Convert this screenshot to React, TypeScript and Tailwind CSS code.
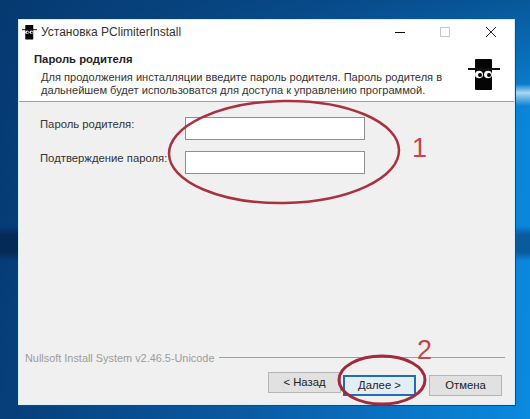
const FONT = "font-['Liberation_Sans',Arial,sans-serif]"

function HatIcon({ size }: { size: number }) {
  return (
    <svg width={size} height={size} viewBox="0 0 32 32">
      <rect x="7" y="0" width="17" height="31" rx="1" fill="#050505" />
      <rect x="0" y="9" width="32" height="2" fill="#111" />
      <ellipse cx="11" cy="15.5" rx="4" ry="3.8" fill="#f4f4f4" />
      <ellipse cx="20" cy="15.5" rx="4" ry="3.8" fill="#f4f4f4" />
      <circle cx="12" cy="16" r="2" fill="#000" />
      <circle cx="21" cy="16" r="2" fill="#000" />
    </svg>
  )
}

function Field({ label }: { label: string }) {
  return (
    <div className="flex items-center h-[23px]">
      <span className="w-[145px] text-[11.3px] leading-[13px] pb-[9px] text-[#333]">{label}</span>
      <div className="w-[180px] h-[23px] bg-white border border-[#8f8f8f]" />
    </div>
  )
}

function NavButton({ label, active }: { label: string; active?: boolean }) {
  return (
    <button
      className={
        active
          ? "w-[73px] h-[21px] bg-[#e3edf5] border-2 border-[#1f6fb0] text-[11.3px] text-[#222]"
          : "w-[73px] h-[21px] bg-[#e1e1e1] border border-[#b5b5b5] text-[11.3px] text-[#222]"
      }
    >
      {label}
    </button>
  )
}

export default function App() {
  return (
    <div className={`relative w-[530px] h-[419px] overflow-hidden pl-[18px] pt-[19px] bg-[linear-gradient(180deg,#063a7099_0%,#0a5aa300_26%),linear-gradient(95deg,#053a72_0%,#0a5aa3_50%,#0a8ae0_100%)] ${FONT}`}>
      {/* wallpaper rays and dark bands */}
      <div className="absolute left-0 top-[226px] w-[18px] h-[35px] bg-[linear-gradient(180deg,#052a5700,#052a57_25%,#052a57_75%,#052a5700)]" />
      <div className="absolute right-0 top-[226px] w-[15px] h-[35px] bg-[linear-gradient(180deg,#0a5a9e00,#0a5a9e_25%,#0a5a9e_75%,#0a5a9e00)]" />
      <div className="absolute right-0 top-[84px] w-[15px] h-[22px] bg-[linear-gradient(180deg,#0a7bc800,#a9d8f2_40%,#0a84d800)]" />

      {/* WINDOW */}
      <div className="relative w-[497px] h-[386px] flex flex-col bg-[#f0f0f0] border border-[#d6ecf6] shadow-[1px_1px_0_#0f4f80]">

        {/* title bar */}
        <div className="h-[24px] shrink-0 bg-white flex items-center pl-[3px]">
          <HatIcon size={15} />
          <span className="ml-[4px] text-[12px] text-[#333]">Установка PClimiterInstall</span>
          <div className="ml-auto flex items-center">
            <svg width="12" height="12" viewBox="0 0 12 12" className="mr-[33px]">
              <path d="M1 6.5H11" stroke="#111" strokeWidth="1" />
            </svg>
            <svg width="12" height="12" viewBox="0 0 12 12" className="mr-[34px]">
              <rect x="1.5" y="1.5" width="9" height="9" fill="none" stroke="#c8c8c8" />
            </svg>
            <svg width="12" height="12" viewBox="0 0 12 12" className="mr-[17px]">
              <path d="M1 1L11 11M11 1L1 11" stroke="#222" strokeWidth="1" />
            </svg>
          </div>
        </div>

        {/* header */}
        <div className="h-[58px] shrink-0 bg-white border-b border-[#a0a0a0] flex pl-[15px] pr-[14px]">
          <div className="flex-1">
            <p className="text-[11.3px] font-bold text-[#222] leading-[14px] pt-[8px]">Пароль родителя</p>
            <p className="mt-[5px] pl-[7px] text-[11.08px] text-[#333] leading-[13px] whitespace-nowrap">
              Для продолжения инсталляции введите пароль родителя. Пароль родителя в
              <br />
              дальнейшем будет использоватся для доступа к управлению программой.
            </p>
          </div>
          <div className="pt-[15px]">
            <HatIcon size={32} />
          </div>
        </div>

        {/* body */}
        <div className="flex-1 flex flex-col">
          <div className="pt-[15px] pl-[21px] flex flex-col gap-[11px]">
            <Field label="Пароль родителя:" />
            <Field label="Подтверждение пароля:" />
          </div>

          <div className="mt-auto flex items-center pl-[6px] pr-[9px]">
            <span className="text-[10.9px] text-[#9c9c9c] whitespace-nowrap">Nullsoft Install System v2.46.5-Unicode</span>
            <div className="flex-1 ml-[5px] h-px bg-[#a0a0a0]" />
          </div>

          <div className="flex pt-[6px] pb-[8px] pl-[249px]">
            <NavButton label="< Назад" />
            <div className="ml-[2px]">
              <NavButton label="Далее >" active />
            </div>
            <div className="ml-[13px]">
              <NavButton label="Отмена" />
            </div>
          </div>
        </div>
      </div>

      {/* red annotations */}
      <svg className="absolute inset-0" width="530" height="419" viewBox="0 0 530 419" fill="none">
        <ellipse cx="284" cy="152" rx="115" ry="51" stroke="#a8323f" strokeWidth="2.5" transform="rotate(-1 284 152)" />
        <ellipse cx="382" cy="380" rx="43" ry="24" stroke="#a02a3e" strokeWidth="3" />
      </svg>
      <span className="absolute left-[412px] top-[133px] text-[27px] leading-[30px] text-[#c0484c]">1</span>
      <span className="absolute left-[417px] top-[335px] text-[27px] leading-[30px] text-[#c0484c]">2</span>
    </div>
  )
}
